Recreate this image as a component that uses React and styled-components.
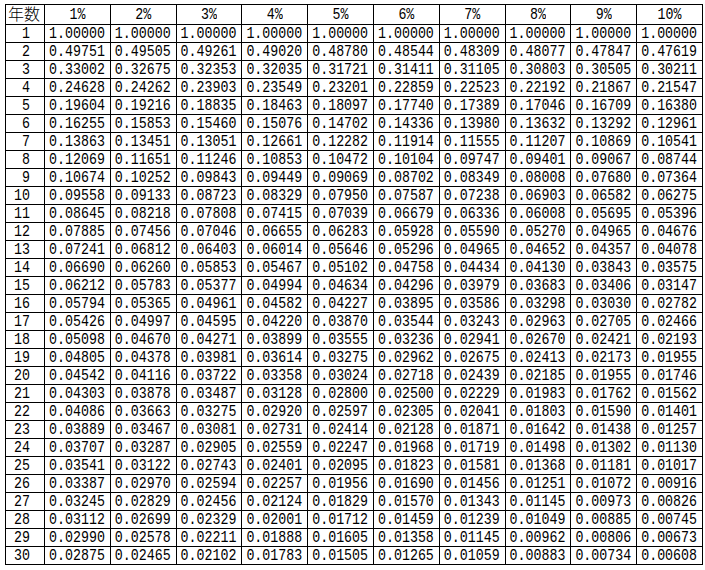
import React from "react";
import styled, { createGlobalStyle } from "styled-components";

const Global = createGlobalStyle`
  html, body { margin: 0; padding: 0; background: #ffffff; }
  body { font-family: "Liberation Mono", "DejaVu Sans Mono", monospace; color: #000; }
`;

const rates = ["1%", "2%", "3%", "4%", "5%", "6%", "7%", "8%", "9%", "10%"];

const raw = `1.00000 1.00000 1.00000 1.00000 1.00000 1.00000 1.00000 1.00000 1.00000 1.00000
0.49751 0.49505 0.49261 0.49020 0.48780 0.48544 0.48309 0.48077 0.47847 0.47619
0.33002 0.32675 0.32353 0.32035 0.31721 0.31411 0.31105 0.30803 0.30505 0.30211
0.24628 0.24262 0.23903 0.23549 0.23201 0.22859 0.22523 0.22192 0.21867 0.21547
0.19604 0.19216 0.18835 0.18463 0.18097 0.17740 0.17389 0.17046 0.16709 0.16380
0.16255 0.15853 0.15460 0.15076 0.14702 0.14336 0.13980 0.13632 0.13292 0.12961
0.13863 0.13451 0.13051 0.12661 0.12282 0.11914 0.11555 0.11207 0.10869 0.10541
0.12069 0.11651 0.11246 0.10853 0.10472 0.10104 0.09747 0.09401 0.09067 0.08744
0.10674 0.10252 0.09843 0.09449 0.09069 0.08702 0.08349 0.08008 0.07680 0.07364
0.09558 0.09133 0.08723 0.08329 0.07950 0.07587 0.07238 0.06903 0.06582 0.06275
0.08645 0.08218 0.07808 0.07415 0.07039 0.06679 0.06336 0.06008 0.05695 0.05396
0.07885 0.07456 0.07046 0.06655 0.06283 0.05928 0.05590 0.05270 0.04965 0.04676
0.07241 0.06812 0.06403 0.06014 0.05646 0.05296 0.04965 0.04652 0.04357 0.04078
0.06690 0.06260 0.05853 0.05467 0.05102 0.04758 0.04434 0.04130 0.03843 0.03575
0.06212 0.05783 0.05377 0.04994 0.04634 0.04296 0.03979 0.03683 0.03406 0.03147
0.05794 0.05365 0.04961 0.04582 0.04227 0.03895 0.03586 0.03298 0.03030 0.02782
0.05426 0.04997 0.04595 0.04220 0.03870 0.03544 0.03243 0.02963 0.02705 0.02466
0.05098 0.04670 0.04271 0.03899 0.03555 0.03236 0.02941 0.02670 0.02421 0.02193
0.04805 0.04378 0.03981 0.03614 0.03275 0.02962 0.02675 0.02413 0.02173 0.01955
0.04542 0.04116 0.03722 0.03358 0.03024 0.02718 0.02439 0.02185 0.01955 0.01746
0.04303 0.03878 0.03487 0.03128 0.02800 0.02500 0.02229 0.01983 0.01762 0.01562
0.04086 0.03663 0.03275 0.02920 0.02597 0.02305 0.02041 0.01803 0.01590 0.01401
0.03889 0.03467 0.03081 0.02731 0.02414 0.02128 0.01871 0.01642 0.01438 0.01257
0.03707 0.03287 0.02905 0.02559 0.02247 0.01968 0.01719 0.01498 0.01302 0.01130
0.03541 0.03122 0.02743 0.02401 0.02095 0.01823 0.01581 0.01368 0.01181 0.01017
0.03387 0.02970 0.02594 0.02257 0.01956 0.01690 0.01456 0.01251 0.01072 0.00916
0.03245 0.02829 0.02456 0.02124 0.01829 0.01570 0.01343 0.01145 0.00973 0.00826
0.03112 0.02699 0.02329 0.02001 0.01712 0.01459 0.01239 0.01049 0.00885 0.00745
0.02990 0.02578 0.02211 0.01888 0.01605 0.01358 0.01145 0.00962 0.00806 0.00673
0.02875 0.02465 0.02102 0.01783 0.01505 0.01265 0.01059 0.00883 0.00734 0.00608`;

const rows = raw.split("\n").map((line) => line.trim().split(/\s+/));

const Page = styled.div`
  padding: 4px 0 0 5px;
`;

const Table = styled.table`
  border-collapse: collapse;
  table-layout: fixed;
  width: 697px;
  font-size: 13.3px;
  line-height: 1;
`;

const Col = styled.col`
  width: ${(p) => p.$w}px;
`;

const HeadRow = styled.tr`
  height: 20px;
`;

const BodyRow = styled.tr`
  height: 18px;
`;

const Cell = styled.td`
  border: 1px solid #000;
  padding: 0;
  white-space: nowrap;
  vertical-align: middle;
`;

const HeadCell = styled(Cell).attrs({ as: "th" })`
  font-weight: normal;
  text-align: ${(p) => (p.$left ? "left" : "center")};
  padding-left: ${(p) => (p.$left ? "2px" : "0")};
`;

const YearCell = styled(Cell)`
  text-align: right;
  padding-right: 14px;
`;

const ValueCell = styled(Cell)`
  text-align: left;
  padding-left: 4px;
`;

const Glyphs = styled.span`
  display: inline-block;
  transform: scaleY(1.28);
`;

const Kanji = styled.span`
  display: inline-block;
  font-family: "Noto Sans CJK JP", "DejaVu Sans", sans-serif;
  font-size: 16px;
  font-weight: 300;
  line-height: 16px;
  height: 16px;
  overflow: visible;
`;

export default function App() {
  return (
    <>
      <Global />
      <Page>
        <Table>
          <colgroup>
            <Col $w={39} />
            {rates.map((r) => (
              <Col key={r} $w={65.8} />
            ))}
          </colgroup>
          <thead>
            <HeadRow>
              <HeadCell $left>
                <Kanji>年数</Kanji>
              </HeadCell>
              {rates.map((r) => (
                <HeadCell key={r}>
                  <Glyphs>{r}</Glyphs>
                </HeadCell>
              ))}
            </HeadRow>
          </thead>
          <tbody>
            {rows.map((vals, i) => (
              <BodyRow key={i}>
                <YearCell>
                  <Glyphs>{i + 1}</Glyphs>
                </YearCell>
                {vals.map((v, j) => (
                  <ValueCell key={j}>
                    <Glyphs>{v}</Glyphs>
                  </ValueCell>
                ))}
              </BodyRow>
            ))}
          </tbody>
        </Table>
      </Page>
    </>
  );
}
